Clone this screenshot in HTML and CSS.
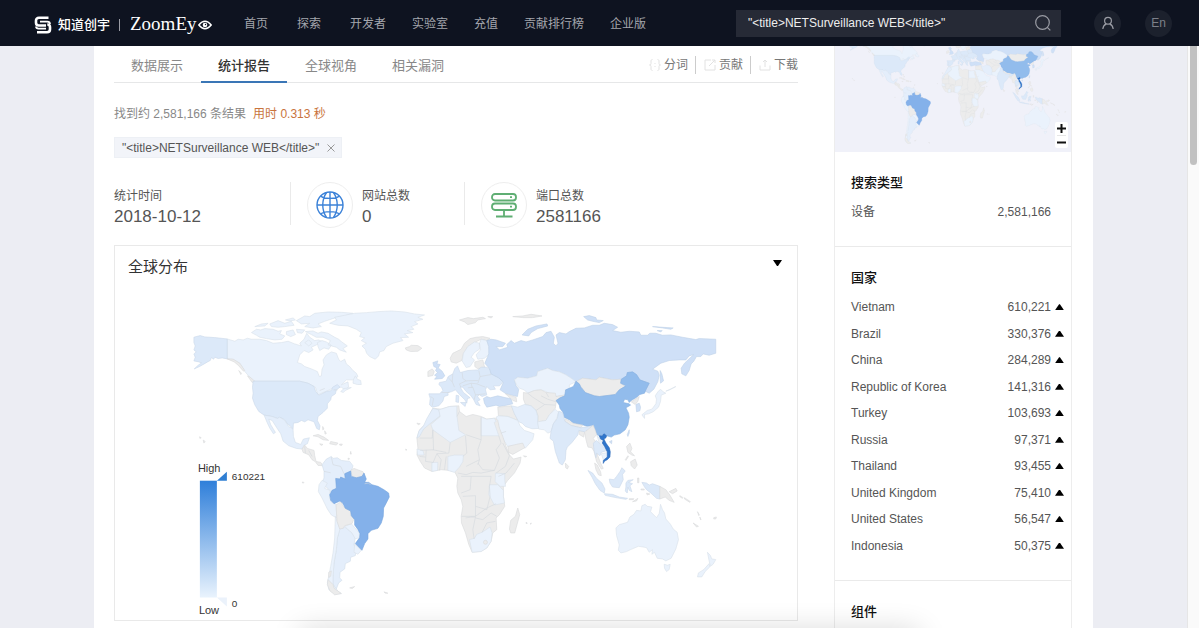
FILE: index.html
```html
<!DOCTYPE html>
<html lang="zh-CN">
<head>
<meta charset="utf-8">
<title>ZoomEye</title>
<link rel="stylesheet" href="styles.css">
</head>
<body>
<header class="topbar">
  <a class="brand" href="#">
    <svg class="brand-mark" viewBox="0 0 18 18" width="18" height="18" fill="none" stroke="#fff" stroke-width="2.600" stroke-linejoin="round"><path d="M14.500 1.800H5Q2 1.800 2 4.800v2q0 2.700 2.700 2.700H12"/><path d="M3 16.200h10q3 0 3-3v-2q0-2.700-2.700-2.700"/><path d="M6 5.600h7.300q2.700 0 2.700 2.500M12 12.600H4.500q-2.500 0-2.500-2" stroke-width="1.800"/></svg>
    <span class="brand-cn">知道创宇</span>
    <span class="brand-rule"></span>
    <span class="brand-en">ZoomEy</span>
    <svg class="brand-eye" viewBox="0 0 14 10" width="14" height="10"><path d="M.8 5Q7-2.500 13.200 5 7 12.500.8 5Z" fill="none" stroke="#fff" stroke-width="1.400"/><circle cx="7" cy="5" r="2.300" fill="#fff"/><circle cx="7.500" cy="4.500" r=".7" fill="#0e1320"/></svg>
  </a>
  <nav class="nav">
    <a href="#">首页</a><a href="#">探索</a><a href="#">开发者</a><a href="#">实验室</a><a href="#">充值</a><a href="#">贡献排行榜</a><a href="#">企业版</a>
  </nav>
  <form class="search">
    <input class="search-input" type="text" aria-label="搜索" value="&quot;&lt;title&gt;NETSurveillance WEB&lt;/title&gt;&quot;">
    <button class="search-button" type="button" aria-label="提交搜索"><svg viewBox="0 0 18 18" width="18" height="18" fill="none" stroke="#9a9ca4" stroke-width="1.200"><circle cx="8.500" cy="8.500" r="6.800"/><path d="M13.300 13.300l3 3"/></svg></button>
  </form>
  <button class="round" type="button" aria-label="用户"><svg viewBox="0 0 14 14" width="14" height="14" fill="none" stroke="#9a9ca4" stroke-width="1.200"><circle cx="7" cy="4.700" r="3.400"/><path d="M1.800 13c.3-2.700 1.800-4.400 3.600-5.100M12.200 13c-.3-2.700-1.800-4.400-3.600-5.100"/></svg></button>
  <button class="round round-lang" type="button">En</button>
</header>

<div class="page">
  <div class="sheet">
    <main class="main">
      <div class="tabbar">
        <nav class="tabs">
          <a class="tab" href="#">数据展示</a><a class="tab tab-active" href="#">统计报告</a><a class="tab" href="#">全球视角</a><a class="tab" href="#">相关漏洞</a>
        </nav>
        <div class="actions">
          <button class="action" type="button"><svg viewBox="0 0 12 12" width="12" height="12" fill="none" stroke="#e2e2e2"><path d="M3.500.5C2 .5 2 1.500 2 3v1.500Q2 6 .5 6 2 6 2 7.500V9c0 1.500 0 2.500 1.500 2.500M8.500.5C10 .5 10 1.500 10 3v1.500Q10 6 11.500 6 10 6 10 7.500V9c0 1.500 0 2.500-1.500 2.500M5.500 4.500h1M5.500 7.500h1"/></svg>分词</button>
          <button class="action" type="button"><svg viewBox="0 0 12 12" width="12" height="12" fill="none" stroke="#e2e2e2"><path d="M7 1H1v10h10V6M5 7l6-6M8 1h3v3"/></svg>贡献</button>
          <button class="action" type="button"><svg viewBox="0 0 12 12" width="12" height="12" fill="none" stroke="#e2e2e2"><path d="M1 6.500v4.500h10V6.500M6 8V1M4 3l2-2 2 2"/></svg>下载</button>
        </div>
      </div>

      <p class="summary">找到约 2,581,166 条结果<span class="timing">用时 0.313 秒</span></p>

      <div class="tag"><span>"&lt;title&gt;NETSurveillance WEB&lt;/title&gt;"</span><button class="tag-close" type="button" aria-label="移除"><svg viewBox="0 0 8 8" width="8" height="8" stroke="#999" fill="none"><path d="M.5.5l7 7M7.500.5l-7 7"/></svg></button></div>

      <section class="stats">
        <div class="stat stat-date"><div><div class="stat-label">统计时间</div><div class="stat-value">2018-10-12</div></div></div>
        <div class="stat">
          <span class="stat-icon"><svg viewBox="0 0 28 28" width="28" height="28" fill="none" stroke="#3c82d8" stroke-width="1.400"><circle cx="14" cy="14" r="13"/><path d="M14 1v26M1 14h26M10.500 1.500C5.500 9 5.500 19 10.500 26.500M17.500 1.500c5 7.500 5 17.500 0 25M5 5c2.500 3.200 15.500 3.200 18 0M5 23c2.500-3.200 15.500-3.200 18 0"/></svg></span>
          <div><div class="stat-label">网站总数</div><div class="stat-value">0</div></div>
        </div>
        <div class="stat">
          <span class="stat-icon"><svg viewBox="0 0 26 26" width="26" height="26" fill="none" stroke="#5fae73" stroke-width="1.800"><rect x="1" y="2" width="24" height="6.500" rx="3"/><rect x="1" y="11.500" width="24" height="6.500" rx="3"/><path d="M13 18v6M5 24.500h16.500"/><path d="M19 5.200h2M19 14.700h2"/></svg></span>
          <div><div class="stat-label">端口总数</div><div class="stat-value">2581166</div></div>
        </div>
      </section>

      <section class="card">
        <div class="card-head"><h2 class="card-title">全球分布</h2><button class="card-toggle" type="button" aria-label="折叠"><svg viewBox="0 0 9 6" width="9" height="6"><path d="M0 0h9L5 6H4Z"/></svg></button></div>
        <svg class="map" viewBox="115 288 683 332" role="img" aria-label="全球分布">
          <defs>
            <linearGradient id="scale" x1="0" y1="0" x2="0" y2="1"><stop offset="0" stop-color="#2f7fda"/><stop offset="1" stop-color="#e9f3fd"/></linearGradient>
            <g id="world" stroke-width="1.800" stroke-linejoin="round">
              <g transform="translate(185 300) scale(.33333)" class="c1">
                <path d="M127 117L150 124 160 118 175 120 188 115 200 118 225 118 245 122 265 130 290 128 310 124 330 132 350 138 345 130 358 118 366 100 375 112 390 122 402 120 412 125 395 135 380 142 385 150 372 158 358 152 345 165 338 188 350 192 360 200 380 207 398 215 404 230 410 228 412 208 418 195 415 180 425 165 440 156 455 160 462 178 468 185 480 178 485 192 495 200 505 212 515 220 520 230 505 240 485 240 470 255 490 246 492 262 480 270 470 262 450 262 430 272 415 278 400 285 392 262 370 250 345 244H205L195 232 180 215 165 190 145 178 127 177Z"/>
                <path d="M505 250L506 240 512 228 518 238 528 242 530 254 518 254ZM468 275L478 266 500 263 482 272 476 278Z"/>
                <path d="M362 95L385 93 400 100 410 96 430 100 450 112 462 118 470 125 488 138 475 146 485 157 465 150 455 142 440 138 430 135 437 122 415 112 395 112 380 104ZM200 98L215 88 228 90 240 86 265 88 280 94 290 92 285 102 300 108 292 118 270 120 245 116 225 112 215 106ZM335 62L360 48 375 50 390 40 430 36 470 37 505 40 480 48 450 54 420 64 400 72 410 80 385 84 360 80 375 70 350 72ZM210 80L230 72 250 70 240 78ZM255 72L280 62 300 70 320 64 328 76 300 80 280 82 260 80ZM305 95L325 90 332 104 318 110 305 104ZM335 88L360 90 352 100 338 98ZM398 128L412 122 425 126 440 136 432 148 418 144 405 152 400 140ZM302 60L325 54 332 60 315 63ZM360 128L372 120 382 130 372 138Z"/>
                <path d="M435 70L455 60 450 52 480 46 510 40 545 38 580 35 620 33 660 36 690 42 720 45 700 52 715 58 690 65 700 72 680 80 688 88 668 92 685 98 660 102 672 112 648 113 655 122 625 130 605 140 598 152 585 156 582 168 572 178 555 170 546 160 542 148 532 138 545 130 530 122 540 114 525 110 530 98 515 88 490 78 460 76Z"/>
                <path class="c3" d="M27 112L34 110 46 107 60 111 90 113 127 117V177L112 174 100 176 90 172 86 178 80 173 76 182 68 186 58 192 44 200 28 207 40 196 50 189 42 186 27 183 31 172 27 162 34 156 27 150 31 138 27 128Z"/>
                <path class="c0" d="M127 177L145 178 165 190 180 212 176 214 160 196 148 186ZM188 228L196 232 210 244 202 248ZM162 212L170 220 168 224Z"/>
                <path class="c3" d="M205 244H345L370 250 388 260 393 275 402 286 415 280 425 275 440 272 444 262 458 254 466 262 455 270 452 282 440 290 438 300 428 312 428 325 415 338 400 350 398 362 406 378 404 390 396 386 388 366 370 360 360 366 350 362 340 368 326 370 325 388 316 378 308 372 300 360 285 352 278 356 262 350 238 346 222 335 210 315 203 295 205 280 203 262Z"/>
                <path class="c2" d="M238 346L262 350 278 356 285 352 300 362 312 380 325 388 326 410 332 428 348 434 356 418 374 414 368 432 358 436 352 448 335 446 312 438 295 424 288 402 276 384 262 362 252 358 258 375 272 398 266 402 255 385 247 368Z"/>
                <path class="c0" d="M352 448L360 436 368 446 388 452 390 468 394 485 408 488 415 498 400 497 392 486 382 480 372 465 355 458ZM385 408L400 404 418 412 432 422 415 420 400 411ZM438 425L460 430 455 436 435 432ZM465 433l8 0-2 4-6-1ZM414 380l4 8-4 2ZM420 393l5 8-4 2ZM405 432l10 2-6 3ZM44 411l5 3-4 2ZM55 421l6 4-4 5ZM498 455l2 8-3 0ZM662 144L675 140 680 136 700 137 712 145 700 154 678 155 665 150Z"/>
                <path class="ln" d="M360 440l2 20M372 452l10 18M447 270l12 0M405 272l15-6"/>
              </g>
              <g transform="translate(185 450) scale(.33333)">
                <path class="c2" d="M412 45L425 28 440 20 445 26 458 24 470 32 495 35 505 48 500 65 482 72 480 88 455 86 457 112 440 128 425 112 410 102 418 85 418 65Z"/>
                <path class="c0" d="M498 62L508 56 535 66 540 74 535 78 515 86 503 80Z"/>
                <path class="c1" d="M403 105L412 92 428 100 420 116 436 122 434 142 440 158 455 165 456 205 440 196 428 178 412 145 401 126Z"/>
                <path class="c2" d="M465 238L480 232 500 248 512 264 508 285 514 305 512 318 498 323 497 335 482 342 480 358 466 368 465 385 472 392 462 400 455 418 445 405 445 380 448 340 455 300 458 265Z"/>
                <path class="c1" d="M480 230L500 222 512 236 524 250 524 264 512 268 502 250ZM510 283L530 302 520 314 508 308Z"/>
                <path class="c1" d="M452 200L466 238 458 265 455 300 448 340 445 380 445 405 460 425 470 432 450 434 432 420 428 398 432 380 438 350 445 310 450 265 451 230Z"/>
                <path class="c0" d="M430 390L445 405 448 416 470 432 450 436 436 424 428 405ZM432 368l8-4-2 16-6 4ZM495 415L510 411 503 417ZM598 427L610 431 602 431ZM352 97l6 1-3 3ZM490 25l5 2-4 3Z"/>
                <path class="c0" d="M454 165L470 156 474 168 484 178 498 184 500 200 508 208 502 222 480 228 476 236 465 238 457 215Z"/>
                <path class="c7" d="M453 86L466 88 468 82 482 88 480 72 498 64 500 80 515 84 532 80 538 70 545 88 540 98 552 98 562 105 580 110 598 120 612 130 614 142 604 162 597 175 596 200 590 220 580 236 560 242 550 252 550 268 540 282 532 302 522 292 512 282 525 264 526 252 520 240 510 226 510 210 500 198 498 184 482 176 474 160 466 154 448 162 438 152 435 135 442 122 455 116Z"/>
                <path class="ln" d="M440 22L445 45 468 50 478 72M540 102l12-2 6 6M418 65l20 4"/>
              </g>
              <g transform="translate(400 300) scale(.33333)">
                <path class="c0" d="M180 60L205 53 222 56 250 52 258 56 235 60 228 68 205 74 195 66ZM265 50h15l-5 4ZM340 50L370 48 395 43 428 48 400 53 370 53Z"/>
                <path class="c0" d="M152 175L160 160 185 148 195 130 212 116 230 112 250 110 272 115 262 122 245 118 225 128 205 140 192 160 187 182 170 190 155 186Z"/>
                <path class="c1" d="M192 160L205 140 225 126 240 130 240 148 225 158 215 172 225 180 212 200 200 203 188 183ZM240 130L245 118 262 122 268 140 272 160 255 175 235 178 230 165 243 150Z"/>
                <path class="c4" d="M100 188L115 183 112 192 122 194 116 204 128 214 136 228 128 236 105 238 112 230 105 226 114 218 108 212 112 204 103 200Z"/>
                <path class="c0" d="M85 215L98 207 104 215 100 227 85 230ZM226 186L250 180 256 204 234 206 226 200Z"/>
                <path class="c3" d="M88 282L120 282 130 272 126 262 118 254 120 248 140 244 146 230 160 222 166 206 174 198 178 208 182 218 205 212 235 210 245 202 262 202 272 208 275 222 298 234 312 246 300 258 282 258 288 268 272 270 262 260 258 270 262 285 248 290 240 285 234 290 242 300 234 304 242 318 230 314 222 298 212 285 200 275 190 262 182 262 192 278 212 294 204 296 202 310 196 300 180 284 168 270 155 276 145 278 146 286 134 290 130 304 118 318 98 322 90 315 92 296ZM170 286L178 288 177 308 169 306ZM183 308L200 308 197 320Z"/>
                <path class="ln" d="M160 222L158 245 165 262M188 218L190 236 200 243 180 252 184 262M200 243L235 242M238 212L242 230 235 250M242 230L275 224M190 258L215 250 232 252 258 262M205 264L220 262 228 285 258 282M93 290L102 296 98 318M126 278L150 278M145 232L158 246M228 285L224 300M215 250L218 264"/>
                <path class="c4" d="M262 122L275 118 290 120 318 130 310 140 290 140 300 150 325 142 322 134 335 122 345 130 365 122 380 126 400 120 430 110 440 98 455 94 465 112 462 130 470 138 476 130 470 105 480 98 500 102 510 95 530 85 555 84 580 76 600 76 615 70 640 74 655 82 640 92 665 97 690 94 720 96 725 106 745 106 752 100 770 100 790 106 815 105 850 112 890 119 900 116 950 118V160L930 166 912 162 905 170 892 170 884 184 876 192 870 212 860 228 848 222 846 205 856 190 875 172 884 164 870 168 860 180 840 180 810 182 785 190 760 208 776 214 780 226 776 245 764 268 750 280 738 274 750 250 725 242 710 225 690 216 682 225 684 240 665 238 640 240 620 236 600 232 590 240 550 235 530 246 510 236 500 225 480 216 460 212 445 205 415 215 412 228 385 235 355 232 345 240 350 258 358 268 354 290 320 282 302 270 312 247 298 234 275 222 270 206 256 190 268 162 268 140Z"/>
                <path class="c4" d="M368 105L385 88 410 78 443 72 445 78 415 86 395 98 388 108ZM553 50L570 47 590 53 592 60 612 62 600 68 580 64 565 60ZM760 80L790 82 822 84 815 88 790 84ZM774 92l15 0-4 4ZM783 212L788 222 793 243 784 250 783 235Z"/>
                <path class="c1" d="M345 240L355 232 385 235 412 228 415 215 445 205 460 212 480 216 500 225 520 238 530 246 510 255 510 268 498 270 500 285 470 290 460 288 440 275 425 270 405 272 385 280 374 270 360 265 352 256Z"/>
                <path class="c0" d="M372 278L385 280 405 272 425 270 440 278 468 280 470 290 500 285 494 292 475 300 470 310 468 325 450 345 440 362 415 366 416 348 410 332 395 318 378 314 372 298Z"/>
                <path class="ln" d="M385 280L400 292 425 308 436 314M425 288L445 298 470 306M410 332L436 314 468 316M440 278L448 292"/>
                <path class="c0" d="M528 246L550 235 590 240 600 232 620 236 640 240 665 238 664 250 678 260 660 270 648 284 600 290 582 286 560 280 545 260Z"/>
                <path class="c6" d="M470 302L482 294 496 288 499 270 522 260 530 244 540 252 545 262 558 278 585 288 600 290 648 284 660 270 680 258 664 250 666 238 682 228 684 218 700 216 712 224 722 240 750 250 740 270 736 280 722 284 710 294 696 302 690 308 686 300 676 298 672 308 690 312 694 316 680 324 688 340 690 352 686 375 678 390 662 402 645 406 636 412 622 408 610 404 600 408 592 404 588 390 580 376 565 380 550 375 525 372 510 360 494 352 490 336 482 326 480 316Z"/>
                <path class="c4" d="M252 296L262 290 272 294 295 288 320 294 334 296 340 312 322 316 300 320 290 316 262 322 255 310Z"/>
                <path class="c0" d="M318 282L350 292 352 306 340 302 334 296ZM295 322L336 318 345 340 356 362 325 350 297 348Z"/>
                <path class="c2" d="M336 318L355 322 375 314 395 318 410 332 415 350 415 366 418 386 398 387 378 380 368 370 358 366 345 342Z"/>
                <path class="c1" d="M290 352L297 348 325 350 355 362 362 378 375 392 388 396 404 402 400 420 378 445 350 438 325 440 312 420 300 390ZM415 366L440 362 450 345 468 328 478 338 472 355 462 372 455 396 445 400 435 390 418 388Z"/>
                <path class="c0" d="M325 440L350 434 370 430 376 444 340 464 328 458ZM498 356L520 370 550 376 545 384 515 377 496 364ZM540 392L556 396 553 412 540 404Z"/>
                <path class="c3" d="M478 334L490 338 494 352 496 364 515 377 545 384 580 378 572 394 560 392 556 396 538 392 536 405 518 428 504 442 500 452 498 480 489 496 480 490 468 455 462 424 452 416 455 396 462 372 474 356Z"/>
                <path class="c0" d="M556 398L572 384 582 376 588 392 592 404 582 416 592 430 584 436 592 458 604 490 612 506 606 508 592 486 584 455 578 444 566 442 560 420Z"/>
                <path class="c3" d="M582 430L592 422 600 430 612 432 624 452 606 458 602 468 592 460 590 474 584 450Z"/>
                <path class="c1" d="M606 462L626 458 626 474 612 480ZM592 404L602 418 612 432 620 450 626 460 612 440 600 430Z"/>
                <path class="c9" d="M600 408L608 408 614 402 622 408 620 414 614 418 620 430 630 444 633 456 632 472 624 480 616 484 612 491 612 482 624 472 624 456 616 440 609 430 612 422 604 418Z"/>
                <path class="c4" d="M630 426L638 422 637 432ZM684 405L690 390 690 400 686 410ZM710 314L720 310 724 322 722 333 712 336Z"/>
                <path class="c0" d="M696 306L720 290 716 304 708 314Z"/>
                <path class="c1" d="M728 345L744 332 758 328 770 312 772 298 768 288 776 276 784 268 792 276 800 280 786 286 784 305 778 322 762 336 748 342 736 344 736 356ZM800 274L830 260 812 270Z"/>
                <path class="c0" d="M100 325L125 328 150 320 178 318 180 335 200 350 220 344 245 350 262 358 288 355 295 362 300 385 310 410 320 440 330 465 342 478 365 472 362 490 345 520 325 542 312 560 312 590 316 620 300 645 290 655 292 690 280 700 275 725 262 745 245 755 218 758 208 735 198 700 186 670 185 650 190 620 185 600 175 580 172 560 175 535 165 515 150 512 125 510 97 515 75 505 62 485 52 465 55 445 52 415 60 390 80 370 90 345ZM355 625L361 645 346 700 334 700 330 688 334 662 348 650ZM498 490L508 500 504 508 499 504ZM380 668l4 2-3 3ZM392 672l4-2-2 4ZM52 370l10 2-6 3ZM18 448l4 2-3 2ZM372 468l10 2-6 2Z"/>
                <path class="c2" d="M100 326L118 330 122 348 96 368 72 388 60 410 52 415 58 394 72 378 82 356Z"/>
                <path class="c1" d="M94 374L122 350 118 330 150 320 172 319 172 345 178 392 198 405 152 428 100 390ZM245 352L262 358 285 355 290 365 284 368 298 408H245ZM145 470L165 466 192 466 190 486 180 502 165 518 145 512ZM97 488L115 488 114 512 97 515ZM288 520L316 522 316 540 318 560 302 560 287 546ZM270 555L295 555 312 572 312 590 315 610 285 616 268 585ZM210 720L225 716 232 704 248 698 272 682 278 700 275 725 262 745 245 756 218 758ZM52 448L70 452 74 466 54 466Z"/>
                <path class="ln" d="M180 335L172 350M245 352V420L200 405M60 415L98 415 100 390M100 390L102 450 62 452M152 428L148 460 112 462 100 490M198 408L202 460 190 470M245 420L235 450 240 480 200 500M298 408L305 430 290 450 300 475 285 512 250 510 235 490M240 480L235 495M112 462L125 480 120 512M140 470L135 510M175 520L200 525 220 518 245 520 285 512M185 530L215 530 212 570 185 580M215 530L275 530 270 560 272 590 262 630 228 620 228 588 190 590M228 620V650H186M228 650L262 625 290 612M228 652H215L198 655M228 652L220 690 224 718M228 655L250 660 275 640 292 650M248 698L262 670 288 665M310 430L330 468 318 500 290 520M297 530L320 520 345 490M80 450L78 485 100 488M60 470L78 472M100 450L140 458M304 400L320 395"/>
                <circle class="c0" cx="258" cy="728" r="6"/>
              </g>
              <g transform="translate(570 430) scale(.33333)">
                <path class="c3" d="M56 122L70 130 82 146 98 160 107 178 105 190 92 182 78 162 68 142ZM105 192L130 194 150 202 175 206 170 209 135 203 108 197ZM120 148L134 150 142 140 152 126 158 114 168 124 160 134 162 150 150 174 130 172 122 160ZM170 160L176 152 192 150 178 158 190 162 182 168 188 186 180 182 176 172 174 190 168 184 170 172ZM218 158L232 160 240 166 250 162 272 170V208L262 206 245 190 232 180 226 172Z"/>
                <path class="c0" d="M180 207l14 0-2 3-12 0ZM190 216L206 206 202 214ZM76 100L84 106 94 126 96 138 88 136 80 120ZM272 170L290 180 302 196 315 218 300 212 288 202 272 208ZM300 186L320 176 324 184 310 192ZM172 50L182 40 188 56 184 66 196 78 188 76 176 68ZM184 96L198 88 204 106 196 118 186 108ZM168 90l8-12 2 2-8 12ZM205 145l4 0 0 14-4 0ZM332 198l10 6-2 2-8-5ZM346 204l18 12-2 2-16-10ZM385 246l6 10-2 2ZM392 262l4 8-2 0ZM372 280L388 290 382 292ZM434 264l8-2-2 6-6 0ZM215 178l10 0 0 3-9 0ZM232 190l10 3-8 3Z"/>
                <path class="c1" d="M140 295L150 285 175 278 182 262 194 254 202 242 215 244 218 228 228 224 234 230 248 232 244 246 262 264 270 252 274 224 280 240 286 250 290 268 304 284 312 298 324 308 328 330 320 358 306 386 290 394 280 388 264 386 256 368 248 374 250 360 240 368 232 354 208 350 184 360 172 366 155 370 147 362 150 346 142 318ZM285 404L295 407 303 404 300 420 292 426 286 416ZM415 368L424 378 428 388 440 390 432 404 424 410 420 394ZM420 402L422 412 408 426 398 442 385 442 388 430 404 420Z"/>
              </g>
            </g>
          </defs>
          <use href="#world"/>
          <rect x="200" y="481" width="17" height="117" fill="url(#scale)"/>
          <path d="M217 481L227 472V481Z" fill="#2f7fd3"/><path d="M217 598H227V607Z" fill="#ebf2fb"/>
          <g class="legend"><text x="198" y="472">High</text><text class="legend-num" x="232" y="480">610221</text><text class="legend-num" x="232" y="607">0</text><text x="199" y="615">Low</text></g>
        </svg>
      </section>
    </main>

    <aside class="side">
      <div class="mini">
        <svg class="mini-map" viewBox="158 359 572 256" role="img" aria-label="地图"><use href="#world"/></svg>
        <div class="zoom"><button type="button" aria-label="放大"><svg viewBox="0 0 9 9" width="9" height="9" stroke="#111" stroke-width="2"><path d="M0 4.500h9M4.500 0v9"/></svg></button><button type="button" aria-label="缩小"><svg viewBox="0 0 9 9" width="9" height="9" stroke="#111" stroke-width="2"><path d="M0 4.500h9"/></svg></button></div>
      </div>
      <section class="facet">
        <h3 class="facet-title">搜索类型</h3>
        <table class="facet-table"><tr><td><a href="#">设备</a></td><td class="num">2,581,166</td><td class="arrow"></td></tr></table>
      </section>
      <section class="facet">
        <h3 class="facet-title">国家</h3>
        <table class="facet-table facet-countries">
          <tr><td><a href="#">Vietnam</a></td><td class="num">610,221</td><td class="arrow"><i></i></td></tr>
          <tr><td><a href="#">Brazil</a></td><td class="num">330,376</td><td class="arrow"><i></i></td></tr>
          <tr><td><a href="#">China</a></td><td class="num">284,289</td><td class="arrow"><i></i></td></tr>
          <tr><td><a href="#">Republic of Korea</a></td><td class="num">141,316</td><td class="arrow"><i></i></td></tr>
          <tr><td><a href="#">Turkey</a></td><td class="num">103,693</td><td class="arrow"><i></i></td></tr>
          <tr><td><a href="#">Russia</a></td><td class="num">97,371</td><td class="arrow"><i></i></td></tr>
          <tr><td><a href="#">Thailand</a></td><td class="num">93,455</td><td class="arrow"><i></i></td></tr>
          <tr><td><a href="#">United Kingdom</a></td><td class="num">75,410</td><td class="arrow"><i></i></td></tr>
          <tr><td><a href="#">United States</a></td><td class="num">56,547</td><td class="arrow"><i></i></td></tr>
          <tr><td><a href="#">Indonesia</a></td><td class="num">50,375</td><td class="arrow"><i></i></td></tr>
        </table>
      </section>
      <section class="facet"><h3 class="facet-title">组件</h3></section>
    </aside>
  </div>
</div>
<div class="scrolltrack"><div class="scrollthumb"></div></div>
<div class="dock-shadow"></div>
</body>
</html>
```
FILE: styles.css
```css
* { box-sizing: border-box; }
body {
  margin: 0;
  height: 100vh;
  overflow: hidden;
  display: flex;
  flex-direction: column;
  background: #ecedf3;
  color: #555;
  font: 12px/18px "Liberation Sans", "Noto Sans CJK SC", sans-serif;
}
a { color: inherit; text-decoration: none; }
button { border: 0; padding: 0; background: none; font: inherit; color: inherit; }
svg { display: block; }

.topbar {
  flex: none;
  height: 46px;
  padding: 0 27px 0 34px;
  display: flex;
  align-items: center;
  background: #0e1320;
  color: #a4a6ad;
}
.brand { display: flex; align-items: center; width: 210px; color: #fff; padding-top: 3px; }
.brand-cn { margin-left: 6px; font-size: 13px; font-weight: 500; }
.brand-rule { width: 1px; height: 12px; margin: 0 10px 0 9px; background: #9a9ca4; }
.brand-en { font: 19px/20px "Liberation Serif", serif; padding-bottom: 2px; }
.brand-eye { margin-left: 1px; margin-top: 1px; }
.nav { display: flex; gap: 26px; flex: 1; padding-top: 2px; white-space: nowrap; }
.nav a:nth-child(-n+2) { margin-right: 3px; }
.search { display: flex; align-items: center; width: 325px; height: 27px; margin-right: 33px; padding: 0 9px 0 12px; background: #262a36; }
.search-input { flex: 1; min-width: 0; border: 0; padding: 0; background: none; color: #eee; font: inherit; outline: 0; }
.round { display: flex; align-items: center; justify-content: center; width: 27px; height: 27px; border-radius: 50%; background: #1c212d; }
.round-lang { margin-left: 24px; color: #7d8089; }

.page { flex: 1; min-height: 0; overflow: hidden; padding-right: 12px; }
.sheet { display: flex; gap: 36px; max-width: 999px; margin: 0 auto; padding: 0 21px 0 20px; background: #fff; }
.main { flex: 1; min-width: 0; }

.tabbar { display: flex; justify-content: space-between; height: 37px; border-bottom: 1px solid #e6e7e8; }
.tabs { display: flex; gap: 1px; }
.tab { height: 37px; padding: 0 17px; font-size: 13px; line-height: 40px; color: #888; border-bottom: 2px solid transparent; }
.tab-active { color: #333; font-weight: 500; border-color: #3a76b6; }
.actions { display: flex; align-items: center; padding-top: 2px; }
.action { display: flex; align-items: center; gap: 3px; height: 18px; padding: 0 7px 0 8px; color: #777; border-left: 1px solid #ccc; }
.action:first-child { border: 0; }
.action:last-child { padding-right: 0; }

.summary { margin: 22px 0 0; color: #888; }
.timing { margin-left: 7px; color: #c9743d; }
.tag { display: inline-flex; align-items: center; gap: 8px; height: 21px; margin-top: 14px; padding: 0 6px 0 7px; background: #f2f4f9; border: 1px solid #edf0f5; }

.stats { display: flex; margin-top: 24px; height: 46px; }
.stat { display: flex; align-items: center; gap: 9px; width: 174px; padding-left: 17px; }
.stat + .stat { background: linear-gradient(#eaeaea, #eaeaea) left 0 top 0 / 1px 43px no-repeat; }
.stat-date { width: 176px; padding-left: 0; }
.stat-icon { display: flex; align-items: center; justify-content: center; width: 46px; height: 46px; border: 1px solid #eee; border-radius: 50%; }
.stat-label { line-height: 20px; padding-top: 4px; }
.stat-value { font-size: 17px; line-height: 22px; }

.card { margin-top: 17px; border: 1px solid #e9e9e9; }
.card-head { display: flex; justify-content: space-between; align-items: center; height: 42px; padding: 0 15px 0 13px; }
.card-title { margin: 0; font-size: 15px; font-weight: 400; color: #333; }
.card-toggle { margin-top: -8px; }
.map { width: 100%; }
.legend { font-size: 11px; fill: #333; }
.legend-num { font-size: 10px; }

.c0 { fill: #ececec; stroke: #d8dadc; }
.c1 { fill: #eaf2fc; stroke: #d9e1ea; }
.c2 { fill: #e4eefb; stroke: #d2dde9; }
.c3 { fill: #dce9f9; stroke: #cbd9ea; }
.c4 { fill: #cfe0f7; stroke: #bfd1e8; }
.c6 { fill: #92bcec; stroke: #84aedf; }
.c7 { fill: #84b1ea; stroke: #76a4de; }
.c9 { fill: #2f75cb; stroke: #2a68b8; }
.ln { fill: none; stroke: #d4d8dd; }

.side { flex: none; width: 238px; border: 1px solid #ededed; border-top: 0; }
.mini { position: relative; height: 106px; background: #f0f1f9; overflow: hidden; }
.mini-map { width: 100%; height: 106px; }
.zoom { position: absolute; right: 3px; bottom: 4px; padding: 0 2px; background: #fff; border-radius: 2px; }
.zoom button { display: flex; align-items: center; height: 13px; }
.zoom button + button { border-top: 1px solid #e5e5e5; }

.facet { padding: 22px 7px 21px 16px; border-bottom: 1px solid #eaeaea; }
.facet-title { margin: 0 0 7px; font-size: 13px; line-height: 18px; font-weight: 500; color: #111; }
.facet-table { width: 100%; height: 26px; border-collapse: collapse; }
.facet-countries { height: 265px; }
.facet-table td { padding: 0; }
.facet-table .num { text-align: right; }
.facet-table .arrow { width: 13px; }
.arrow i { display: block; width: 9px; height: 6px; margin-left: auto; background: #000; clip-path: polygon(0 100%, 45% 0, 55% 0, 100% 100%); }

.scrolltrack { position: fixed; top: 46px; right: 0; bottom: 0; width: 12px; padding: 0 2px; background: #fafafa; border-left: 1px solid #e6e6e6; }
.scrollthumb { height: 119px; width: 7px; background: #c1c1c1; border-radius: 0 0 4px 4px; }
.dock-shadow { position: fixed; left: 300px; right: 280px; top: 100%; height: 20px; box-shadow: 0 4px 30px 0 rgba(0, 0, 0, .2); pointer-events: none; }
```
